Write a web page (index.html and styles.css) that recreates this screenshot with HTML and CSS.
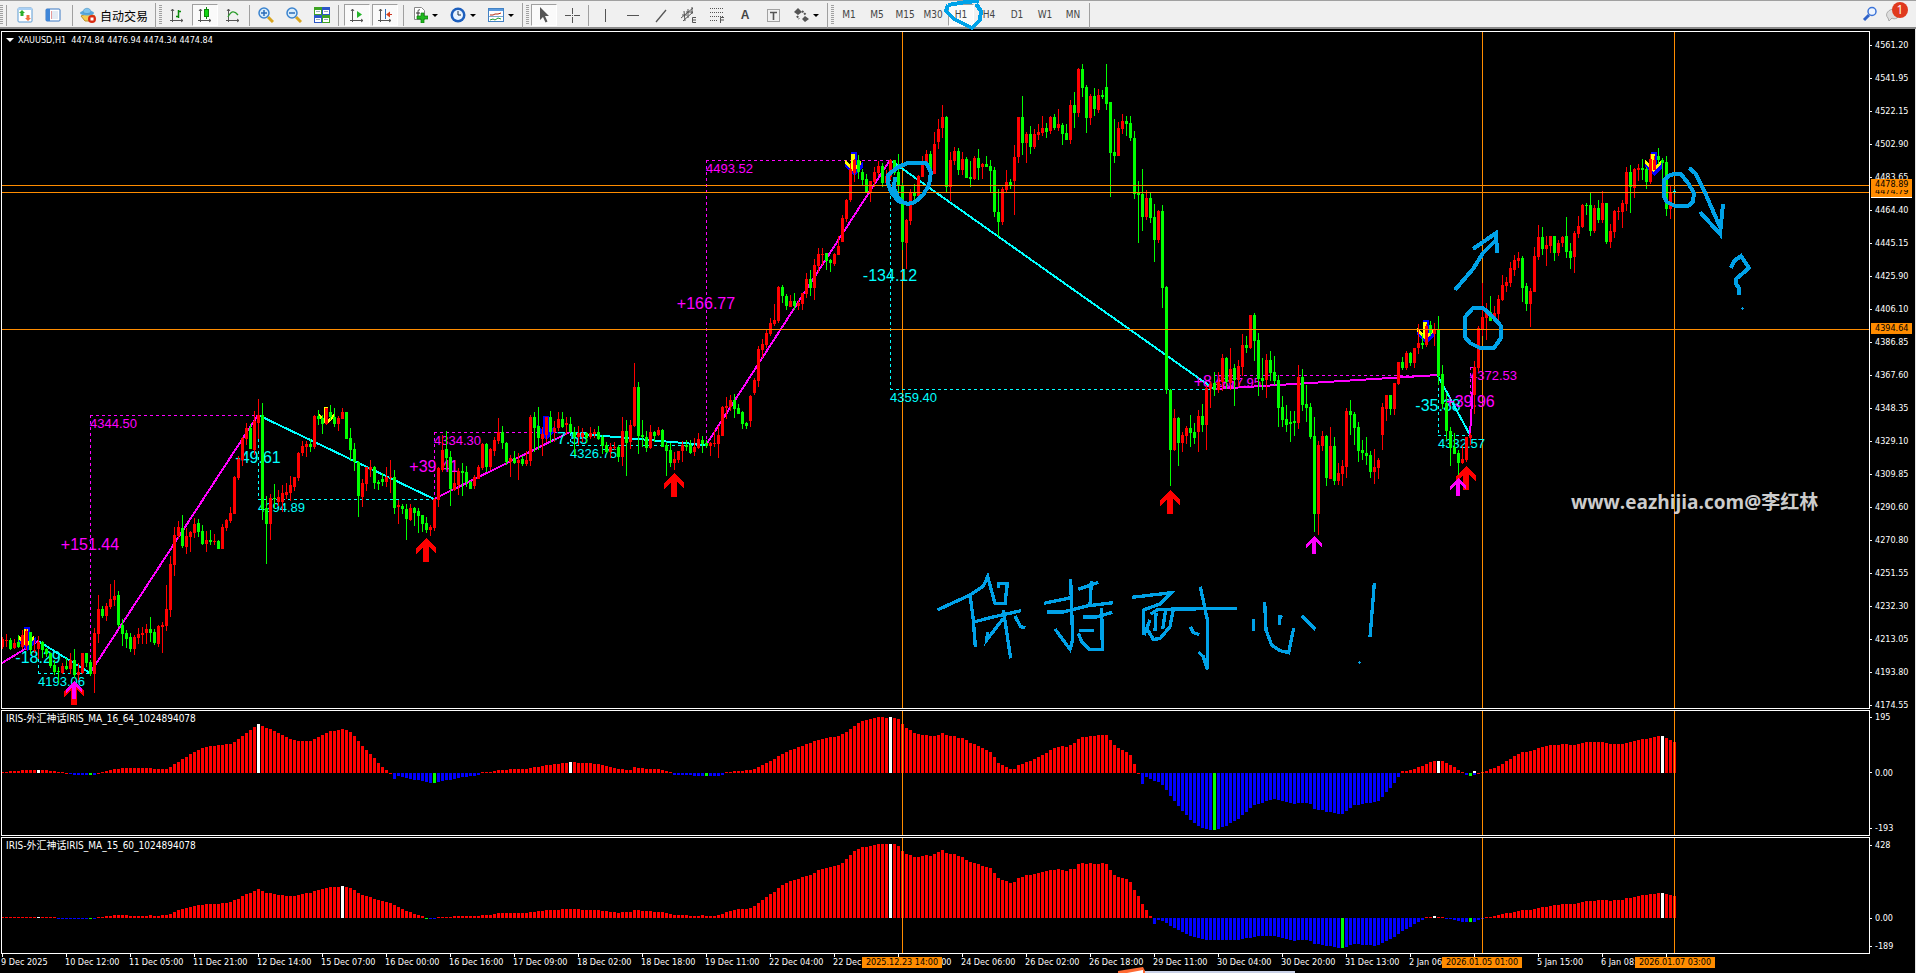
FILE: index.html
```html
<!DOCTYPE html>
<html lang="zh-CN">
<head>
    <meta charset="UTF-8">
    <meta name="viewport" content="width=device-width, initial-scale=1.0">
    <title>XAUUSD,H1</title>
    <link rel="stylesheet" href="styles.css">
</head>
<body>
    <header class="toolbar">
        <span class="grip"></span>
        <span class="sep"></span>
        <div class="group group-first">
            <button class="tool" aria-label="市场报价"><svg viewBox="0 0 16 16"><rect x="1" y="1" width="14" height="14" rx="1" fill="#fff" stroke="#5b9bd5"/><path d="M1 1h14v2H1z" fill="#a9d0f5"/><path d="M5 3l3 3H6.500v3h-3V6H2z" fill="#2cae2c"/><path d="M11 14l-3-3h1.500V8h3v3H14z" fill="#f07040"/></svg></button>
            <button class="tool" aria-label="导航"><svg viewBox="0 0 16 16"><rect x="1" y="2" width="14" height="12" rx="1" fill="#fff" stroke="#3b78c3"/><path d="M1 2h4v12H1z" fill="#3f86d8"/><path d="M7 5h6M7 7h6M7 9h6M7 11h6" stroke="#c5d5e8"/><path d="M6 5h1M6 7h1M6 9h1M6 11h1" stroke="#c33"/></svg></button>
        </div>
        <span class="sep"></span>
        <button class="auto-trade"><svg viewBox="0 0 16 16"><path d="M1 9l7-3 7 3-3 5H5z" fill="#f3cb52" stroke="#b9902a"/><ellipse cx="7" cy="6" rx="7" ry="2.500" fill="#58a6dc"/><path d="M3 5c0-5 8-5 8 0-2 2-6 2-8 0z" fill="#7fc4ee" stroke="#3b84b8" stroke-width=".5"/><circle cx="12" cy="12" r="4" fill="#d92b12"/><path d="M10.500 10.500h3v3h-3z" fill="#fff"/></svg>自动交易</button>
        <span class="sep sep-end"></span>

        <span class="grip"></span>
        <button class="tool" aria-label="柱状图"><svg viewBox="0 0 16 16"><path d="M3.500 2v13M1 13.500h13M2 4l1.500-2L5 4M12 12l2 1.500-2 1.500" fill="none" stroke="#555"/><path d="M9.500 3v8M7 9.500h2M10 4.500h2" stroke="#0a8a0a" stroke-width="1.500"/></svg></button>
        <button class="tool pressed" aria-label="蜡烛图"><svg viewBox="0 0 16 16"><path d="M3.500 2v13M1 13.500h13M2 4l1.500-2L5 4M12 12l2 1.500-2 1.500" fill="none" stroke="#555"/><path d="M9.500 0v12" stroke="#0a8a0a"/><rect x="7.500" y="2.500" width="4" height="7" fill="#12d312" stroke="#0a8a0a"/></svg></button>
        <button class="tool" aria-label="折线图"><svg viewBox="0 0 16 16"><path d="M3.500 2v13M1 13.500h13M2 4l1.500-2L5 4M12 12l2 1.500-2 1.500" fill="none" stroke="#555"/><path d="M3 10c3-6 6-7 10-2" fill="none" stroke="#2c9c2c" stroke-width="1.300"/></svg></button>
        <span class="sep"></span>
        <button class="tool" aria-label="放大"><svg viewBox="0 0 16 16"><path d="M10 10l5 5" stroke="#d8a520" stroke-width="3"/><circle cx="6" cy="6" r="5" fill="#d8ecfb" stroke="#3b84cf" stroke-width="1.500"/><path d="M3 6h6M6 3v6" stroke="#2a6cb8" stroke-width="1.500"/></svg></button>
        <button class="tool" aria-label="缩小"><svg viewBox="0 0 16 16"><path d="M10 10l5 5" stroke="#d8a520" stroke-width="3"/><circle cx="6" cy="6" r="5" fill="#d8ecfb" stroke="#3b84cf" stroke-width="1.500"/><path d="M3 6h6" stroke="#2a6cb8" stroke-width="1.500"/></svg></button>
        <button class="tool" aria-label="平铺窗口"><svg viewBox="0 0 16 16"><path d="M0 0h8v8H0zM8 8h8v8H8z" fill="#3da324"/><path d="M8 0h8v8H8zM0 8h8v8H0z" fill="#2d57c8"/><path d="M1 3h6v4H1zM9 3h6v4H9zM1 11h6v4H1zM9 11h6v4H9z" fill="#fff"/><path d="M2 4.500h4M10 4.500h4M2 12.500h4M10 12.500h4" stroke="#9ab"/></svg></button>
        <span class="sep"></span>
        <div class="group">
            <button class="tool pressed" aria-label="自动滚动"><svg viewBox="0 0 16 16"><path d="M3.500 2v13M1 13.500h13M2 4l1.500-2L5 4M12 12l2 1.500-2 1.500" fill="none" stroke="#555"/><path d="M8 4l5 3.500L8 11z" fill="#25b52b"/></svg></button>
            <button class="tool pressed" aria-label="图表平移"><svg viewBox="0 0 16 16"><path d="M3.500 2v13M1 13.500h13M2 4l1.500-2L5 4M12 12l2 1.500-2 1.500" fill="none" stroke="#555"/><path d="M8.500 2v10" stroke="#2a6cb8"/><path d="M15 7.500h-4" stroke="#c32"/><path d="M9 7.500l4-3v6z" fill="#d4401c"/></svg></button>
        </div>
        <span class="sep"></span>
        <button class="tool drop" aria-label="指标"><svg viewBox="0 0 16 16"><path d="M2.500.5h7l3 3v9h-10z" fill="#fff" stroke="#888"/><path d="M8 3c-2-1-2 1-2 3v4M4 6h4" fill="none" stroke="#333"/><path d="M9 6h3v3h4v3h-4v4H9v-4H5V9h4z" fill="#21b821" stroke="#087f08" stroke-width=".7"/></svg></button>
        <button class="tool drop" aria-label="时间周期"><svg viewBox="0 0 16 16"><circle cx="8" cy="8" r="7.500" fill="#1d5fbd"/><circle cx="8" cy="8" r="5" fill="#e9f4ff"/><path d="M8 4v4h3" fill="none" stroke="#234"/></svg></button>
        <button class="tool drop" aria-label="模板"><svg viewBox="0 0 16 16"><rect x=".5" y="1.500" width="15" height="13" fill="#fff" stroke="#4382c4"/><path d="M1 2h14v2H1z" fill="#5a9be0"/><path d="M2 8h3l2-1h3l3-1" fill="none" stroke="#b32b10"/><path d="M1 9.500h14" stroke="#7ca7d0"/><path d="M2 13l3-1 2 1 3-2 3 1" fill="none" stroke="#1c9a2c"/></svg></button>
        <span class="sep sep-end"></span>

        <span class="grip"></span>
        <button class="tool pressed" aria-label="光标"><svg viewBox="0 0 16 16"><path d="M4 0v13l3-3 2.500 5.500 2-1L9 9h4z" fill="#555"/></svg></button>
        <button class="tool" aria-label="十字准线"><svg viewBox="0 0 16 16"><path d="M8.500 1v6M8.500 10v6M1 8.500h6M10 8.500h6M8 8.500h1" stroke="#555"/></svg></button>
        <span class="sep"></span>
        <button class="tool" aria-label="垂直线"><svg viewBox="0 0 16 16"><path d="M8.500 2v13" stroke="#555"/></svg></button>
        <button class="tool" aria-label="水平线"><svg viewBox="0 0 16 16"><path d="M2 8.500h12" stroke="#555"/></svg></button>
        <button class="tool" aria-label="趋势线"><svg viewBox="0 0 16 16"><path d="M3 15L13 3" stroke="#555" stroke-width="1.300"/></svg></button>
        <button class="tool" aria-label="等距通道"><svg viewBox="0 0 16 16"><path d="M0 11L12 1M2 14L12 5M3 4l1 10M7 2l0 9M11 0v7M1 8h5M5 5h7" stroke="#555"/><path d="M15 10.500h-3.500v5H15M12 13h3" fill="none" stroke="#555"/></svg></button>
        <button class="tool" aria-label="斐波那契"><svg viewBox="0 0 16 16"><path d="M1 1.500h13M1 5.500h13M1 9.500h13M1 13.500h8" stroke="#555" stroke-dasharray="1 1"/><path d="M15 10.500h-3.500V16M12 13h3" fill="none" stroke="#555"/></svg></button>
        <button class="tool letter">A</button>
        <button class="tool" aria-label="文本标签"><svg viewBox="0 0 16 16"><rect x="2.500" y="2.500" width="12" height="12" fill="none" stroke="#555" stroke-dasharray="1 1"/><path d="M5 5.500h7M8.500 5v8" stroke="#555" stroke-width="1.600"/></svg></button>
        <button class="tool drop" aria-label="箭头"><svg viewBox="0 0 16 16"><path d="M5 1l4 4-4 3-4-3zM12 9l4 3-4 3-3-3z" fill="#555"/><path d="M4 9l2 3M9 4l4 4" stroke="#555" stroke-width="2" stroke-dasharray="2 1"/></svg></button>
        <span class="sep sep-end"></span>

        <span class="grip"></span>
        <nav class="timeframes">
            <button>M1</button>
            <button>M5</button>
            <button>M15</button>
            <button>M30</button>
            <button class="pressed">H1</button>
            <button>H4</button>
            <button>D1</button>
            <button>W1</button>
            <button>MN</button>
        </nav>
        <span class="sep sep-end"></span>

        <div class="toolbar-right">
            <button class="plain" aria-label="搜索"><svg viewBox="0 0 16 16"><path d="M7 9l-5 5" stroke="#2f62c9" stroke-width="3"/><circle cx="10" cy="5.500" r="4" fill="#eef5ff" stroke="#3b73d8" stroke-width="1.500"/></svg></button>
            <button class="plain notice" aria-label="消息"><svg viewBox="0 0 16 16"><path d="M2 12c-4-4 1-9 6-9s8 6 3 9c-2 1-4 1-5 0l-3 3z" fill="#ddd" stroke="#aaa"/></svg><span class="badge">1</span></button>
        </div>
    </header>

    <main class="terminal">
        <section class="row row-main">
            <div class="panel">
                <svg class="plot" id="price" role="img" aria-label="XAUUSD,H1">
                    <g id="waves" transform="translate(-2 -32)"></g>
                    <g id="candles" transform="translate(-2 -32)"></g>
                    <g id="marks" transform="translate(-2 -32)"></g>
                    <text class="watermark" x="1569" y="477">www.eazhijia.com@李红林</text>
                </svg>
                <h1 class="panel-title"><span class="tri"></span>XAUUSD,H1&nbsp; 4474.84 4476.94 4474.34 4474.84</h1>
            </div>
            <ol class="axis">
                <li>4561.20</li>
                <li>4541.95</li>
                <li>4522.15</li>
                <li>4502.90</li>
                <li>4483.65</li>
                <li>4464.40</li>
                <li>4445.15</li>
                <li>4425.90</li>
                <li>4406.10</li>
                <li>4386.85</li>
                <li>4367.60</li>
                <li>4348.35</li>
                <li>4329.10</li>
                <li>4309.85</li>
                <li>4290.60</li>
                <li>4270.80</li>
                <li>4251.55</li>
                <li>4232.30</li>
                <li>4213.05</li>
                <li>4193.80</li>
                <li>4174.55</li>
            </ol>
            <span class="price-tag tag-bid">4474.79</span>
            <span class="price-tag tag-high">4478.89</span>
            <span class="price-tag tag-low">4394.64</span>
        </section>

        <section class="row row-fast">
            <div class="panel">
                <svg class="plot" role="img" aria-label="IRIS_MA_16_64"><g id="fast" transform="translate(-2 -711)"></g></svg>
                <h2 class="panel-title">IRIS-外汇神话IRIS_MA_16_64_1024894078</h2>
            </div>
            <ol class="axis">
                <li>195</li>
                <li>0.00</li>
                <li>-193</li>
            </ol>
        </section>

        <section class="row row-slow">
            <div class="panel">
                <svg class="plot" role="img" aria-label="IRIS_MA_15_60"><g id="slow" transform="translate(-2 -838)"></g></svg>
                <h2 class="panel-title">IRIS-外汇神话IRIS_MA_15_60_1024894078</h2>
            </div>
            <ol class="axis">
                <li>428</li>
                <li class="zero">0.00</li>
                <li>-189</li>
            </ol>
        </section>

        <footer class="time-axis">
            <ol class="times">
                <li>9 Dec 2025</li>
                <li>10 Dec 12:00</li>
                <li>11 Dec 05:00</li>
                <li>11 Dec 21:00</li>
                <li>12 Dec 14:00</li>
                <li>15 Dec 07:00</li>
                <li>16 Dec 00:00</li>
                <li>16 Dec 16:00</li>
                <li>17 Dec 09:00</li>
                <li>18 Dec 02:00</li>
                <li>18 Dec 18:00</li>
                <li>19 Dec 11:00</li>
                <li>22 Dec 04:00</li>
                <li>22 Dec 20:00</li>
                <li>23 Dec 13:00</li>
                <li>24 Dec 06:00</li>
                <li>26 Dec 02:00</li>
                <li>26 Dec 18:00</li>
                <li>29 Dec 11:00</li>
                <li>30 Dec 04:00</li>
                <li>30 Dec 20:00</li>
                <li>31 Dec 13:00</li>
                <li>2 Jan 06:00</li>
                <li></li>
                <li>5 Jan 15:00</li>
                <li>6 Jan 08:00</li>
                <li></li>
            </ol>
            <span class="time-tag time-a">2025.12.23 14:00</span>
            <span class="time-tag time-b">2026.01.05 01:00</span>
            <span class="time-tag time-c">2026.01.07 03:00</span>
            <svg class="dock" viewBox="0 0 180 6"><path d="M0 4L25 0l3 6H0z" fill="#ff6a33"/><path d="M9 6l16-3v3z" fill="#fff"/><path d="M27 5h150" stroke="#c8d0e6" stroke-width="2"/></svg>
        </footer>
    </main>

    <!-- freehand notes over everything -->
    <svg class="ink" role="img" aria-label="保持耐心！">
        <path d="M948 5L946 11 954 19 966 25 972 28 980 20 981 11 976 4M948 5L966 2 979 1"/>
        <path d="M888 175L898 167 908 163 926 163 931 172 929 185 923 195 915 202 908 204 898 201 891 192 888 183ZM895 177L894 188 898 197 903 202"/>
        <path d="M1473 308L1483 308 1493 317 1501 326 1501 338 1494 348 1480 348 1470 343 1465 337 1465 317Z"/>
        <path d="M1455 290L1473 269 1483 253 1496 240M1473 249L1496 233 1497 253"/>
        <path d="M1675 174L1681 174 1688 183 1694 193 1693 202 1688 206 1675 206 1667 202 1664 197 1664 180 1670 175Z"/>
        <path d="M1689 168L1695 173 1703 188 1720 227M1700 212L1720 234 1723 204"/>
        <path d="M1731 268L1734 261 1741 256 1749 268 1736 279 1736 284 1739 288 1739 295"/>
        <path class="dot" d="M1741 308.500h3M1742.500 307v3"/>
        <svg x="920" y="560" width="480" height="130" viewBox="0 0 1440 390">
            <g class="note">
                <path d="M52 150L150 105 190 78 203 50 225 130 255 130 262 72 235 70 235 85M150 105L160 180 166 260M165 185L215 172 303 152M250 150L272 295M250 175L200 240 203 215M285 168L302 200 316 203"/>
                <path d="M372 130L458 112M452 58L458 240 450 268 405 207M380 156L430 156 500 138 580 128M475 88L535 67M514 62L510 135M488 171L530 171 577 157M545 145L547 268 508 268 485 245 475 220M478 211L523 211"/>
                <path d="M635 112L755 98 720 132 670 150 672 225 690 180M950 145L715 148 692 162M680 205L700 238 720 236 750 200 760 148M708 160L705 212M737 150L728 207M841 80L862 180 862 328 850 290 835 276M811 200L820 218 838 224"/>
                <path d="M1000 178V212M1034 127L1038 210 1055 255 1080 272 1106 278 1121 205M1078 195L1080 170 1087 172M1145 167L1187 208"/>
                <path d="M1363 70L1350 232"/>
                <path class="note-dot" d="M1314 307h9M1318 303v9"/>
            </g>
        </svg>
    </svg>

    <script src="chart.js"></script>
</body>
</html>
```

FILE: styles.css
```css
* {
    box-sizing: border-box;
}

body {
    margin: 0;
    height: 100vh;
    display: flex;
    flex-direction: column;
    position: relative;
    background: #000;
    color: #fff;
    font-family: "DejaVu Sans Condensed", "DejaVu Sans", "Noto Sans CJK SC", sans-serif;
    font-size: 9px;
    line-height: 12px;
    overflow: hidden;
}

button {
    font: inherit;
    color: inherit;
    padding: 0;
    border: 1px solid transparent;
    background: none;
}

ol {
    list-style: none;
    margin: 0;
    padding: 0;
}

/* toolbar */
.toolbar {
    display: flex;
    align-items: center;
    height: 29px;
    padding-top: 2px;
    background: #f0f0f0;
    border-top: 1px solid #a0a0a0;
    border-bottom: 2px solid #8a8a8a;
    color: #444;
}

.grip {
    width: 3px;
    height: 20px;
    margin-right: 1px;
    background: repeating-linear-gradient(#a0a0a0 0 1px, #f0f0f0 1px 2px);
}

.sep {
    width: 1px;
    height: 21px;
    margin: 0 2px;
    background: #a0a0a0;
}

.sep-end {
    height: 25px;
    margin: 0 3px 0 2px;
}

.group {
    display: flex;
    padding: 0 2px;
}

.group-first {
    padding-right: 3px;
}

.tool {
    display: flex;
    align-items: center;
    justify-content: center;
    width: 26px;
    height: 22px;
    margin: 0 1px;
    flex: none;
}

.toolbar svg {
    width: 16px;
    height: 16px;
    flex: none;
}

.pressed {
    background: #fafafa;
    border-color: #a0a0a0 #fff #fff #a0a0a0;
}

.drop {
    width: 36px;
    gap: 4px;
    justify-content: flex-start;
    padding-left: 4px;
}

.drop::after {
    content: "";
    border: 3px solid transparent;
    border-top-color: #000;
    border-bottom: 0;
}

.letter {
    font: bold 12px "Liberation Sans", sans-serif;
}

.auto-trade {
    display: flex;
    align-items: center;
    gap: 4px;
    width: 78px;
    padding-left: 4px;
    white-space: nowrap;
    font: 12px "Noto Sans CJK SC", sans-serif;
    color: #000;
}

.timeframes {
    display: flex;
}

.timeframes button {
    width: 26px;
    height: 22px;
    margin: 0 1px;
    font-size: 10px;
}

.toolbar-right {
    display: flex;
    gap: 8px;
    margin-left: auto;
    padding-right: 14px;
}

.plain {
    width: 16px;
    height: 18px;
    border: 0;
}

.notice {
    position: relative;
}

.badge {
    position: absolute;
    left: 6px;
    top: -4px;
    width: 16px;
    height: 16px;
    border-radius: 50%;
    background: #e03a1e;
    color: #fff;
    font: 12px/16px "Open Sans", sans-serif;
}

/* chart windows */
.terminal {
    flex: 1;
    min-height: 0;
    display: flex;
    flex-direction: column;
    border-right: 1px solid #e3e3e3;
}

.row {
    display: flex;
    position: relative;
    padding-left: 1px;
    margin-top: 1px;
}

.row-main {
    flex: 1;
    margin-top: 0;
}

.row-main .panel {
    margin-top: 2px;
}

.row-fast {
    height: 126px;
}

.row-slow {
    height: 117px;
}

.panel {
    flex: 1;
    min-width: 0;
    position: relative;
    border: 1px solid #fff;
}

.plot {
    position: absolute;
    inset: 0;
    width: 100%;
    height: 100%;
}

.panel-title {
    position: relative;
    display: flex;
    align-items: center;
    gap: 4px;
    margin: 2px 4px;
    font-size: 9px;
    font-weight: normal;
    line-height: 12px;
}

h2.panel-title {
    font-size: 10px;
}

.tri {
    border: 4px solid transparent;
    border-top-color: #fff;
    border-bottom: 0;
}

.axis {
    width: 45px;
    display: flex;
    flex-direction: column;
    justify-content: space-between;
    padding: 1px 0 2px;
}

.row-main .axis {
    padding: 10px 0 0;
    margin-bottom: -2px;
}

.row-slow .axis {
    justify-content: flex-start;
    padding-top: 2px;
}

.row-slow .zero {
    margin: auto 0 16px;
}

.axis li {
    display: flex;
    align-items: center;
    gap: 3px;
    height: 12px;
}

.axis li::before {
    content: "";
    width: 2px;
    height: 1px;
    background: #fff;
}

.price-tag,
.time-tag {
    position: absolute;
    background: #ff8c00;
    color: #000;
    height: 11px;
    line-height: 11px;
}

.price-tag {
    right: 3px;
    width: 41px;
    padding-left: 4px;
}

.tag-high {
    top: 150px;
}

.tag-bid {
    top: 157px;
    height: 12px;
    border-bottom: 1px solid #fff;
}

.tag-low {
    top: 294px;
}

.time-axis {
    position: relative;
    height: 19px;
    padding-left: 1px;
}

.times {
    display: flex;
}

.times li {
    position: relative;
    flex: none;
    width: 64px;
    padding-top: 2px;
    white-space: nowrap;
}

.times li::before {
    content: "";
    position: absolute;
    left: 1px;
    top: 0;
    width: 1px;
    height: 3px;
    background: #fff;
}

.time-tag {
    top: 3px;
    width: 80px;
    text-align: center;
    white-space: nowrap;
}

.time-a {
    left: 862px;
}

.time-b {
    left: 1442px;
}

.time-c {
    left: 1635px;
}

.dock {
    position: absolute;
    left: 1118px;
    bottom: 0;
    width: 180px;
    height: 6px;
}

/* drawing */
.plot rect,
.plot line,
.plot polygon {
    shape-rendering: crispEdges;
}

.wave {
    stroke-width: 2;
}

.guide {
    stroke-dasharray: 3 3;
}

.level {
    stroke: #ff8c00;
}

.price-label {
    font: 13px "Liberation Sans", sans-serif;
}

.swing-label {
    font: 16px "Liberation Sans", sans-serif;
    text-anchor: middle;
}

.watermark {
    font: bold 19px "Open Sans", "Noto Sans CJK SC", sans-serif;
    fill: #ccc;
}

.ink {
    position: absolute;
    inset: 0;
    width: 100%;
    height: 100%;
    pointer-events: none;
}

.ink path {
    fill: none;
    stroke: #00a2e8;
    stroke-width: 4;
    shape-rendering: crispEdges;
}

.ink .note path {
    stroke-width: 10;
}

.ink .dot {
    stroke-width: 1;
}

.ink .note .note-dot {
    stroke-width: 3;
}
```

FILE: chart.js
```js
const NS = 'http://www.w3.org/2000/svg';
const STEP = 4;
const FIRST = 2;
const RED = '#ff0000';
const GREEN = '#00ff00';
const MAGENTA = '#ff00ff';
const CYAN = '#00ffff';

function add(parent, tag, attrs, text) {
    const el = document.createElementNS(NS, tag);
    for (const key in attrs) el.setAttribute(key, attrs[key]);
    if (text) el.textContent = text;
    parent.appendChild(el);
    return el;
}

// colour, high, body top, body bottom, low
const candles = `
r637,639,647,649 r634,640,641,647 g638,640,649,650 r639,643,648,649 g635,642,647,648 r630,635,647,649 r629,631,646,650 g632,632,650,654 r640,650,651,653 r636,642,649,659
g641,642,650,658 g648,649,654,657 g653,653,666,668 g660,665,672,675 g667,671,672,683 r663,666,673,674 g658,666,669,670 r653,660,669,674 g649,660,675,678 r663,672,675,680
r653,653,673,674 g653,653,663,667 g660,662,674,676 r628,633,674,693 r595,609,634,643 g606,609,616,618 r603,606,616,621 r584,599,607,609 r580,596,600,606 g591,595,625,627
g619,625,634,646 g630,633,639,648 g633,637,649,652 r635,637,649,655 r628,634,638,644 r627,633,635,644 r624,629,633,644 g617,629,633,642 g629,632,643,645 r625,626,644,647
r622,625,627,653 r585,609,626,631 r556,564,610,617 r527,535,565,576 r521,527,536,539 g515,528,546,548 r528,536,547,554 r531,532,537,552 r518,524,533,538 g519,523,532,537
g525,531,544,545 r531,540,544,552 g530,540,542,545 r534,541,542,545 g540,541,549,549 r524,527,549,549 r519,520,528,531 r507,513,521,523 r476,477,514,514 r456,459,478,480
r437,438,460,466 r423,428,439,445 g424,428,449,449 r411,421,450,455 r399,415,423,439 g403,415,509,520 g496,508,524,564 r494,498,524,540 g484,498,499,509 r490,497,502,506
r485,493,502,512 r483,492,495,499 r476,485,493,501 r477,477,487,491 r452,453,478,481 r441,446,453,456 r441,444,447,457 g439,444,447,452 r415,416,447,449 g410,416,419,425
g415,418,424,434 r408,408,424,425 g405,412,417,420 g408,417,424,427 r416,418,424,431 r408,412,419,419 g412,412,439,439 g428,438,450,461 g443,449,462,471 g461,462,496,517
r479,483,497,507 r467,467,484,491 r460,467,470,477 g466,467,483,489 g480,482,484,490 g473,479,482,486 r467,477,482,487 r460,477,478,493 g470,477,508,514 r500,505,507,524
g504,506,509,514 g504,509,519,540 r504,508,520,521 g507,508,513,526 g508,511,516,533 g515,515,524,532 g517,523,530,533 r525,527,530,536 r498,499,528,531 r467,468,500,507
r435,450,470,472 g431,449,458,470 g451,457,489,506 r472,483,490,491 r468,471,485,495 g463,471,473,496 g466,472,482,487 g481,482,489,489 r475,477,486,489 r465,467,479,479
r443,444,468,470 g443,444,467,472 r448,449,467,470 r437,440,451,456 r418,432,441,444 g426,432,443,449 g442,443,462,465 r455,458,462,477 g451,458,463,464 r453,460,463,480
g456,459,464,466 r451,460,464,466 r415,417,461,466 g412,417,428,452 g407,426,438,450 r427,434,439,456 r417,417,435,442 g411,417,432,443 r421,428,432,442 r412,419,428,431
g412,419,427,428 r417,423,425,435 g417,424,432,433 g427,432,437,455 r426,433,437,445 r428,433,437,442 g432,433,438,443 r427,433,437,439 r429,432,434,438 g426,432,439,440
g435,437,446,454 g442,445,452,453 r443,447,452,458 r442,447,448,450 g445,447,457,462 r417,431,457,466 g420,431,443,476 r420,425,442,449 r363,387,426,427 g382,387,436,454
g420,435,437,447 g431,437,448,452 r425,432,448,449 g431,432,436,442 r427,430,435,436 g429,430,447,447 g442,445,451,476 g443,450,463,467 r452,459,463,470 r451,451,460,463
r441,445,451,462 g440,445,447,451 g440,445,453,454 r438,447,452,456 r433,439,448,449 g436,440,444,453 g440,443,446,448 r442,443,446,456 r430,443,444,447 r426,435,444,458
r406,407,436,436 r397,406,408,419 r395,400,407,411 g394,400,409,418 g404,408,414,414 g411,412,424,429 g422,423,426,429 r395,396,421,427 r378,380,393,395 r346,349,381,387
r339,344,350,358 r329,333,345,348 r318,323,334,336 r304,320,324,326 r286,287,321,323 g285,287,296,303 g294,296,306,310 r295,301,307,307 g293,301,306,310 r300,303,306,310
r293,293,304,310 r273,279,294,298 g270,279,288,296 r259,265,288,300 r248,254,266,273 r248,254,255,265 g253,253,261,270 g259,260,263,272 r253,254,264,266 r236,246,255,255
r215,218,242,242 r199,200,219,222 r163,169,200,202 r159,160,173,182 g155,160,172,179 g169,172,180,185 g174,179,193,193 r181,181,193,202 r167,172,182,187 r161,166,173,176
g163,166,183,187 r170,176,183,183 r159,160,177,180 g160,160,173,175 g154,172,185,195 g183,185,242,250 r219,220,243,269 r189,193,221,225 g184,192,196,200 r175,176,196,197
r156,164,177,177 r150,154,164,164 g151,154,169,173 r132,144,174,174 r119,129,142,149 r105,117,128,138 g116,117,187,192 r152,160,187,201 r147,151,161,165 g148,151,170,175
r152,159,170,175 g157,159,178,178 g161,177,179,187 r156,158,179,180 g149,158,168,180 r163,164,167,179 g156,164,167,167 g160,166,171,192 g167,170,212,217 g189,212,222,237
r187,189,222,225 r170,182,190,192 g179,182,186,189 r145,157,181,215 r117,117,157,163 g96,117,143,155 r132,134,143,163 g126,134,147,154 r129,134,147,149 r124,132,135,140
r116,128,133,136 g123,128,132,138 r116,117,131,134 g114,117,128,130 r109,124,128,131 g123,125,134,145 g124,133,140,140 r100,105,140,144 g92,105,113,128 r68,69,113,117
g64,69,88,97 g85,87,118,133 r94,96,118,125 g88,96,109,116 r89,95,110,113 g90,95,97,99 g64,87,104,110 g102,102,153,197 g119,152,156,163 r122,128,156,156
r114,121,129,134 g116,121,124,136 g116,123,138,141 g131,138,194,199 g181,193,195,243 g169,194,217,231 r190,198,217,220 g193,198,218,223 g204,217,240,262 r210,211,240,243
g205,211,288,308 g286,287,390,394 g389,390,450,486 r409,418,450,451 g417,418,443,466 r432,435,443,452 r426,428,436,444 g415,428,433,447 g423,432,438,444 r410,416,432,452
g404,416,425,432 r385,388,425,450 r382,384,389,408 g372,383,390,396 r372,382,390,393 r354,358,382,391 g357,358,382,389 r348,369,383,390 g364,368,380,406 r360,366,380,387
r334,345,367,376 g336,345,348,353 r315,315,348,349 g313,315,341,361 g333,340,379,396 g358,378,381,390 r354,360,380,398 g351,360,373,381 g356,372,381,385 g375,380,408,427
g396,407,420,427 g405,419,425,432 g411,422,424,442 g411,421,423,436 r365,377,423,429 g369,377,405,411 g385,404,408,422 g403,407,437,439 g417,436,514,532 r441,445,514,535
r431,436,446,451 g435,436,478,486 r427,446,479,479 g437,446,481,485 r463,473,481,485 r460,466,474,486 r408,411,467,478 g400,411,415,435 g412,414,428,445 g422,427,451,462
g440,450,453,460 g437,453,456,465 g451,455,472,478 r449,467,472,484 r458,460,468,479 r403,407,435,450 r395,395,409,421 g395,395,409,415 r383,383,409,415 r362,362,384,385
g357,362,368,370 r351,353,368,370 g352,353,363,366 r348,348,363,368 r324,343,348,354 g334,343,345,349 r324,326,345,347 g321,325,333,336 r323,329,334,346 g316,329,376,385
g365,374,404,409 g393,403,431,440 g427,431,448,466 g433,447,454,454 g450,453,463,475 r446,459,463,464 r437,437,460,462 r433,435,438,445 r361,367,395,414 r326,328,368,372
r283,317,329,336 r303,312,318,340 g296,312,321,321 r306,313,321,322 r295,299,314,321 r275,285,300,301 r277,282,286,292 r262,268,283,287 r255,260,270,276 r252,258,261,268
g256,258,288,302 g283,286,304,311 r288,291,304,327 r247,256,292,292 r225,237,257,260 g227,237,249,255 r236,245,249,266 r236,236,246,253 g236,236,253,261 r240,243,253,256
r236,237,243,247 g217,236,252,258 g243,251,258,269 r231,233,257,273 r216,226,234,238 r204,205,227,228 g203,205,206,215 g193,205,231,236 r205,208,231,233 g200,208,220,223
r191,203,220,223 g203,203,242,244 r224,231,242,248 r210,211,232,238 r207,211,212,220 r200,203,212,228 r167,172,204,211 g165,172,187,213 r168,169,188,198 r164,168,170,181
g159,168,170,180 g167,169,182,189 r154,159,182,184 r156,160,170,170 g148,156,160,164 g158,160,163,180 g156,162,209,216 r186,192,209,219 c189,191,192,194`;

// histogram heights keyed by the first bar of each run; a letter overrides the colour
const fast = {
    0: '1 1 2 2 2 3 3 3 3 3w 3 3 2 2 1 1 -1r -1 -2 -2 -2 -2 -2g -2 -1r',
    25: '1 2 3 4 4 5 5 5 5 5 5 5 5 4 4 4 4 6 9 11 14 16 19 21 23 25 26 27 27 28 28 29 29 31 34 37 40 43 46 49w',
    65: '47 45 44 42 40 38 36 34 33 32 32 32 32 34 36 38 40 42 42 43 44 43 41 37 32 27 23 19 15 10 6 3 -1r',
    98: '-6 -3 -4 -5 -6 -7 -7 -8 -9 -10 -10g -9 -8 -7 -7 -6 -5 -4 -4 -3 -3 -2',
    120: '1 1 1 2 3 3 3 4 4 4 4 4 5 6 6 7 8 8 9 9 10 10 11w 11 10 10 10 10 9 9 8 7 6 5 4 4 3 3 6 5',
    160: '5 4 4 4 4 3 2 1 -2 -2 -2 -2 -2 -3 -3 -3 -3g -3 -3 -3 -2',
    181: '1 1 2 2 2 3 3 4 6 8 10 12 14 17 19 21 23 24 26 27 29 30 32 33 34 35 36 36 37 39 41 44 47 50 52 53 54 55 56 56 55 56w 55 54',
    225: '49 45 43 40 39 38 38 37 37 38 40 38 37 37 35 35 33 30 29 27 25 23 21 16 10 8 6 4 4 8 9 11 12 14 16 18 20 23 25 26 27 26 28 30',
    269: '34 36 36 37 37 38 38 38 33 28 25 23 21 18 9 -1r',
    285: '-11 -4 -6 -8 -9 -12 -17 -23 -28 -33 -38 -42 -47 -50 -53 -55 -56 -57 -57g -56 -54 -53 -50 -48 -46 -42 -39 -35 -32 -31 -30 -28 -27 -26 -27',
    320: '-28 -29 -30 -31 -30 -30 -30 -31 -36 -37 -37 -39 -39 -40 -41 -41 -38 -35 -32 -32 -31 -30 -30 -29 -28 -24 -19 -15 -10 -4',
    350: '2 2 3 4 6 7 9 11 12 12w 12 10 8 6 3 1 -2 -3g -2/2w -1r',
    370: '1 2 4 5 7 9 12 14 17 19 21 21 22 23 25 26 27 28 28 28 29 29 28 28 29 30 31 31 31 31 31 30 29 29 29 29 30 31 32 33 34 34 35 36 37 37w 35 33 31'
};

const slow = {
    0: '1 1 1 1 1 1 1 1 1 1w 1 1 1 1 -1 -1 -1 -1 -1 -1 -1 -1 -1g -1',
    24: '1 1 2 2 3 3 3 3 2 2 2 2 2 3 2 2 3 3 4 6 8 9 10 11 12 13 13 14 14 14 14 15 15 16 18 19 22 24 25 27 29',
    65: '27 25 25 24 23 23 22 22 22 23 24 25 25 27 28 29 30 31 31 31 32w 31 30 28 25 23 22 21 19 18 17 16 15 13 11 9 7 6 4 3 2',
    106: '-1g -1 -1 1 1 1 1 2 2 2 2 2 2 2 3 3 3 4 5 5 5 5 5 5 5 5 6 6 7 7 8 8 8 8 9 9 9 9 9 8 8 8 8 8 7 7 6 6 5 6 6 6 8 8',
    160: '7 7 7 6 6 6 5 4 3 3 3 3 2 2 2 3 2 2 2 3 4 6 7 8 9 9 9 10 12 15 18 21 24 26 30 33 35 37 38 39 41 42 43 45 48 49 50 51 52',
    209: '53 55 59 63 67 69 71 71 72 73 74 74 74 74w 74 72 67 64 63 61 61 62 63 62 64 66 68 65 64 64 62 61 58 56 55 54 52 51 50',
    248: '45 40 38 37 35 36 40 41 43 43 44 45 46 47 48 48 49 48 47 49 49 54 55 54 55 54 54 55 54 48 43 41 40 39 36 28 22 14 8 2',
    288: '-6 -2 -3 -5 -8 -10 -12 -14 -16 -18 -19 -20 -21 -22 -22 -22 -22 -22 -22 -22 -22 -22 -21 -20 -20 -19 -18 -18 -18 -18 -18 -19',
    320: '-20 -21 -22 -23 -22 -22 -22 -23 -26 -26 -27 -28 -28 -29 -30 -30g -29 -27 -26 -26 -27 -27 -27 -28 -27 -25 -23 -21 -19 -16 -13 -11 -9 -6 -4 -2',
    356: '1 1 2w 1 1 -1 -1 -2 -3 -4 -4 -4g -4 -2 -1 1 1 2 3 4 5 5 6 7 8 8 8 9 10 11 11 12 13 13 14 14 14 14 15 16 17 17 17 18 18 18 17 18 18 18 20 20 21 22 23 23 24 24 25 25w 24 23 22'
};

const swings = [
    [2, 663, 38, 641, MAGENTA],
    [38, 641, 90, 673, CYAN, '-18.29', 663, '4193.06', 686],
    [90, 673, 258, 415, MAGENTA, '+151.44', 550, '4344.50', 428],
    [258, 415, 434, 499, CYAN, '-49.61', 463, '4294.89', 512],
    [434, 499, 570, 432, MAGENTA, '+39.41', 472, '4334.30', 445],
    [570, 433, 706, 445, CYAN, '-7.55', 444, '4326.75', 458],
    [706, 445, 890, 160, MAGENTA, '+166.77', 309, '4493.52', 173],
    [890, 160, 1214, 389, CYAN, '-134.12', 281, '4359.40', 402],
    [1214, 389, 1438, 375, MAGENTA, '+8.55', 387, '4367.95', 387],
    [1438, 376, 1470, 435, CYAN, '-35.38', 411, '4332.57', 448],
    [1470, 435, 1474, 367, MAGENTA, '+39.96', 407, '4372.53', 380]
];

function arrow(x, y, color, size, down) {
    const s = down ? -1 : 1;
    const big = size > 16;
    const a = size / 2;
    const arm = big ? 6 : 4;
    const stem = big ? 3 : 2;
    const h = big ? 24 : 18;
    const pts = [[0, 0], [a, a], [a, a + arm], [stem, stem + arm], [stem, h], [-stem, h], [-stem, stem + arm], [-a, a + arm], [-a, a]];
    add(waves, 'polygon', { points: pts.map(p => (x + p[0]) + ',' + (y + p[1] * s)).join(' '), fill: color });
}

function levels(parent, bottom) {
    for (const x of [902, 1482, 1674]) {
        add(parent, 'line', { class: 'level', x1: x + 0.5, x2: x + 0.5, y1: 0, y2: bottom });
    }
}

const waves = document.getElementById('waves');
const body = document.getElementById('candles');
const marks = document.getElementById('marks');

// grid lines go under the candles
levels(waves, 709);
for (const y of [185, 192, 329]) {
    add(marks, 'line', { class: 'level', x1: 0, x2: '101%', y1: y + 0.5, y2: y + 0.5 });
}

for (const [x1, y1, x2, y2, color, swing, swingY, price, priceY] of swings) {
    if (swing) {
        add(waves, 'line', { class: 'guide', x1: x1 + 0.5, x2: x1 + 0.5, y1: Math.min(y1, y2), y2: Math.max(y1, y2), stroke: color });
        add(waves, 'line', { class: 'guide', x1: x1, x2: x2, y1: y2 + 0.5, y2: y2 + 0.5, stroke: color });
        add(waves, 'text', { class: 'swing-label', x: x1, y: swingY, fill: color }, swing);
        add(waves, 'text', { class: 'price-label', x: x1, y: priceY, fill: color }, price);
    }
    add(waves, 'line', { class: 'wave', x1, y1, x2, y2, stroke: color });
}

for (const [x, y] of [[26, 647], [326, 425], [853, 172], [1425, 340], [1653, 172]]) {
    if (x !== 326) arrow(x + 1, y + 4, '#0000ff', 18, true);
    arrow(x, y, '#ffff00', 16, true);
}
arrow(546, 440, '#0000ff', 18, true);
for (const [x, y] of [[74, 681], [426, 538], [674, 473], [1170, 490], [1466, 466]]) {
    arrow(x, y, RED, 20);
}
for (const [x, y] of [[74, 681], [1314, 536], [1458, 478]]) {
    arrow(x, y, MAGENTA, 16);
}

candles.trim().split(/\s+/).forEach((item, i) => {
    const color = { r: RED, g: GREEN, c: CYAN }[item[0]];
    const [high, top, bottom, low] = item.slice(1).split(',').map(Number);
    const x = FIRST + i * STEP;
    add(body, 'rect', { x, y: high, width: 1, height: low - high, fill: color });
    add(body, 'rect', { x: x - 1, y: top, width: 3, height: bottom - top, fill: color });
});

function histogram(id, data, zero) {
    const parent = document.getElementById(id);
    for (const start in data) {
        data[start].split(' ').forEach((item, n) => {
            for (const part of item.split('/')) {
                const v = parseInt(part, 10);
                const mark = { w: '#ffffff', g: GREEN, r: RED }[part.slice(-1)];
                add(parent, 'rect', {
                    x: FIRST - 1 + (Number(start) + n) * STEP,
                    y: v > 0 ? zero - v : zero,
                    width: 3,
                    height: Math.abs(v),
                    fill: mark || (v > 0 ? RED : '#0000ff')
                });
            }
        });
    }
    levels(parent, 960);
}

histogram('fast', fast, 773);
histogram('slow', slow, 918);
```
